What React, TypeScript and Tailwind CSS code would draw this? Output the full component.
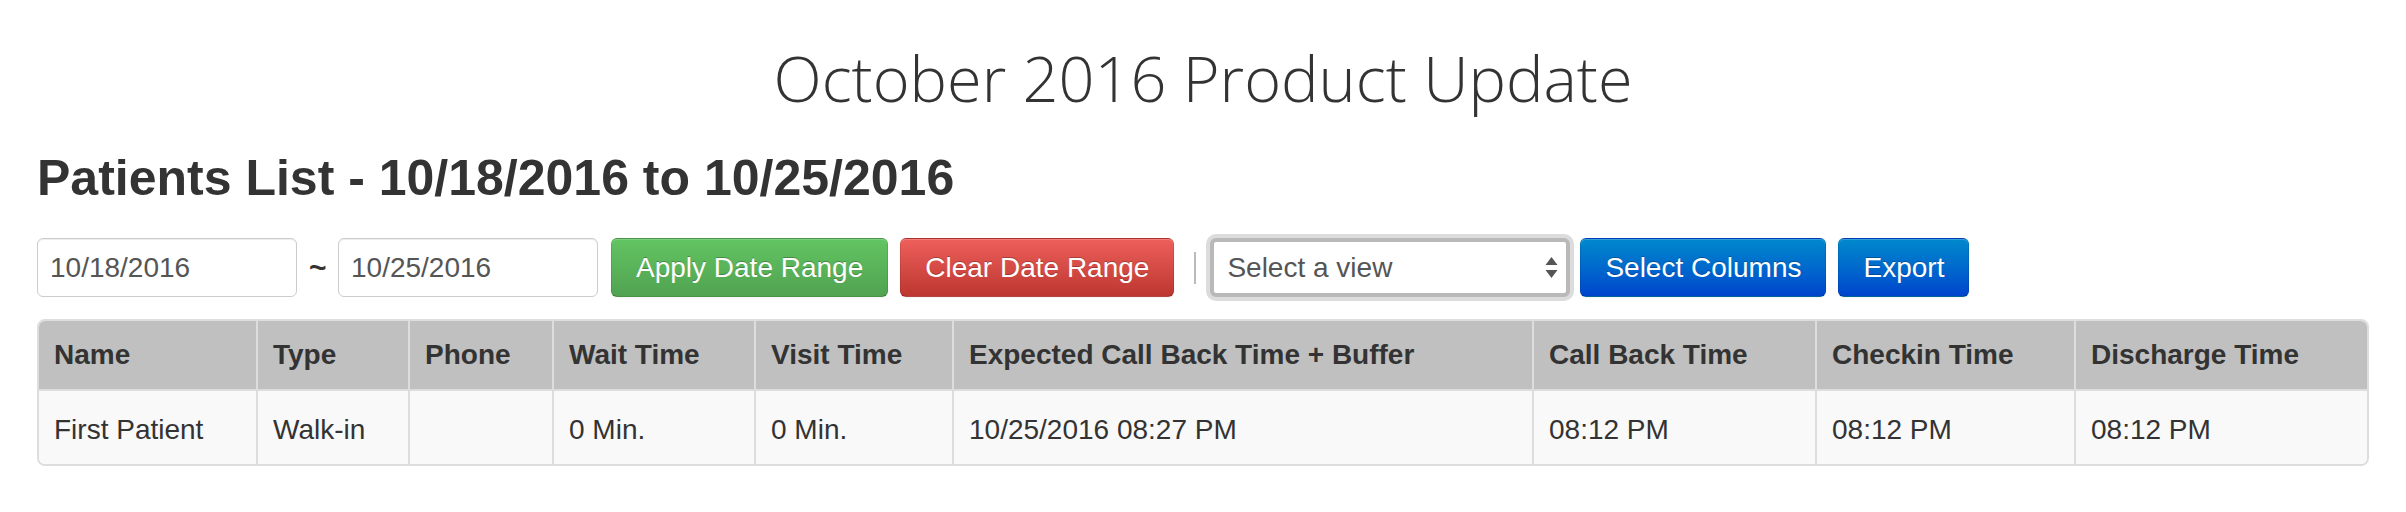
import React from "react";

const columns = [
  { label: "Name", w: "w-[217px]" },
  { label: "Type", w: "w-[152px]" },
  { label: "Phone", w: "w-[144px]" },
  { label: "Wait Time", w: "w-[202px]" },
  { label: "Visit Time", w: "w-[198px]" },
  { label: "Expected Call Back Time + Buffer", w: "w-[580px]" },
  { label: "Call Back Time", w: "w-[283px]" },
  { label: "Checkin Time", w: "w-[259px]" },
  { label: "Discharge Time", w: "flex-1" },
];

const row = [
  "First Patient",
  "Walk-in",
  "",
  "0 Min.",
  "0 Min.",
  "10/25/2016 08:27 PM",
  "08:12 PM",
  "08:12 PM",
  "08:12 PM",
];

const btnBase =
  "h-[59px] px-6 rounded-md border border-black/10 border-b-black/25 text-white text-[28px] leading-none shrink-0 [text-shadow:0_-1px_0_rgba(0,0,0,0.25)] shadow-[inset_0_1px_0_rgba(255,255,255,0.2),0_1px_2px_rgba(0,0,0,0.05)]";

export default function App() {
  return (
    <div className="w-[2406px] h-[512px] overflow-hidden bg-white px-[37px] font-['Liberation_Sans',Arial,sans-serif] text-[#333]">
      {/* Page title */}
      <h1 className="pt-[46px] text-center font-['Open_Sans',sans-serif] font-light text-[63px] leading-none text-[#333]">
        October 2016 Product Update
      </h1>

      <h2 className="mt-[44px] text-[50px] font-bold leading-none">
        Patients List - 10/18/2016 to 10/25/2016
      </h2>

      {/* Toolbar */}
      <div className="mt-[35px] flex items-center gap-3 h-[59px]">
        <div className="w-[260px] h-[59px] shrink-0 rounded-md border border-[#ccc] shadow-[inset_0_1px_1px_rgba(0,0,0,0.075)] flex items-center pl-[12px] text-[28px] text-[#555]">
          10/18/2016
        </div>
        <span className="w-[17px] text-[30px] font-bold text-[#333] leading-none">~</span>
        <div className="w-[260px] h-[59px] shrink-0 rounded-md border border-[#ccc] shadow-[inset_0_1px_1px_rgba(0,0,0,0.075)] flex items-center pl-[12px] text-[28px] text-[#555]">
          10/25/2016
        </div>
        <button className={`${btnBase} ml-px bg-linear-to-b from-[#62c462] to-[#51a351]`}>
          Apply Date Range
        </button>
        <button className={`${btnBase} bg-linear-to-b from-[#ee5f5b] to-[#bd362f]`}>
          Clear Date Range
        </button>
        <div className="ml-2 w-[2px] h-[32px] bg-[#bbb] shrink-0" />
        <div className="ml-0.5 w-[360px] h-[59px] shrink-0 rounded-md border-[4px] border-[#b9b9b9] shadow-[0_0_0_4px_#dcdcdc] bg-white flex items-center justify-between pl-[13px] pr-[8px] text-[28px] text-[#555]">
          <span>Select a view</span>
          <svg width="13" height="26" viewBox="0 0 13 26" className="text-[#555]">
            <path d="M6.5 2 L12.5 10 L0.5 10 Z" fill="currentColor" />
            <path d="M0.5 15 L12.5 15 L6.5 23 Z" fill="currentColor" />
          </svg>
        </div>
        <button className={`${btnBase} -ml-0.5 bg-linear-to-b from-[#0088cc] to-[#0044cc]`}>
          Select Columns
        </button>
        <button className={`${btnBase} bg-linear-to-b from-[#0088cc] to-[#0044cc]`}>
          Export
        </button>
      </div>

      {/* Patients table */}
      <div className="mt-[22px] rounded-lg border-2 border-[#ddd] overflow-hidden text-[28px]">
        <div className="flex h-[70px] bg-[#c0c0c0] border-b-2 border-[#ddd] font-bold">
          {columns.map((c, i) => (
            <div
              key={c.label}
              className={`${c.w} shrink-0 flex items-center px-[15px] ${i > 0 ? "border-l-2 border-[#ddd]" : ""}`}
            >
              {c.label}
            </div>
          ))}
        </div>
        <div className="flex h-[73px] bg-[#f9f9f9]">
          {row.map((v, i) => (
            <div
              key={i}
              className={`${columns[i].w} shrink-0 flex items-center px-[15px] pt-[4px] ${i > 0 ? "border-l-2 border-[#ddd]" : ""}`}
            >
              {v}
            </div>
          ))}
        </div>
      </div>
    </div>
  );
}
